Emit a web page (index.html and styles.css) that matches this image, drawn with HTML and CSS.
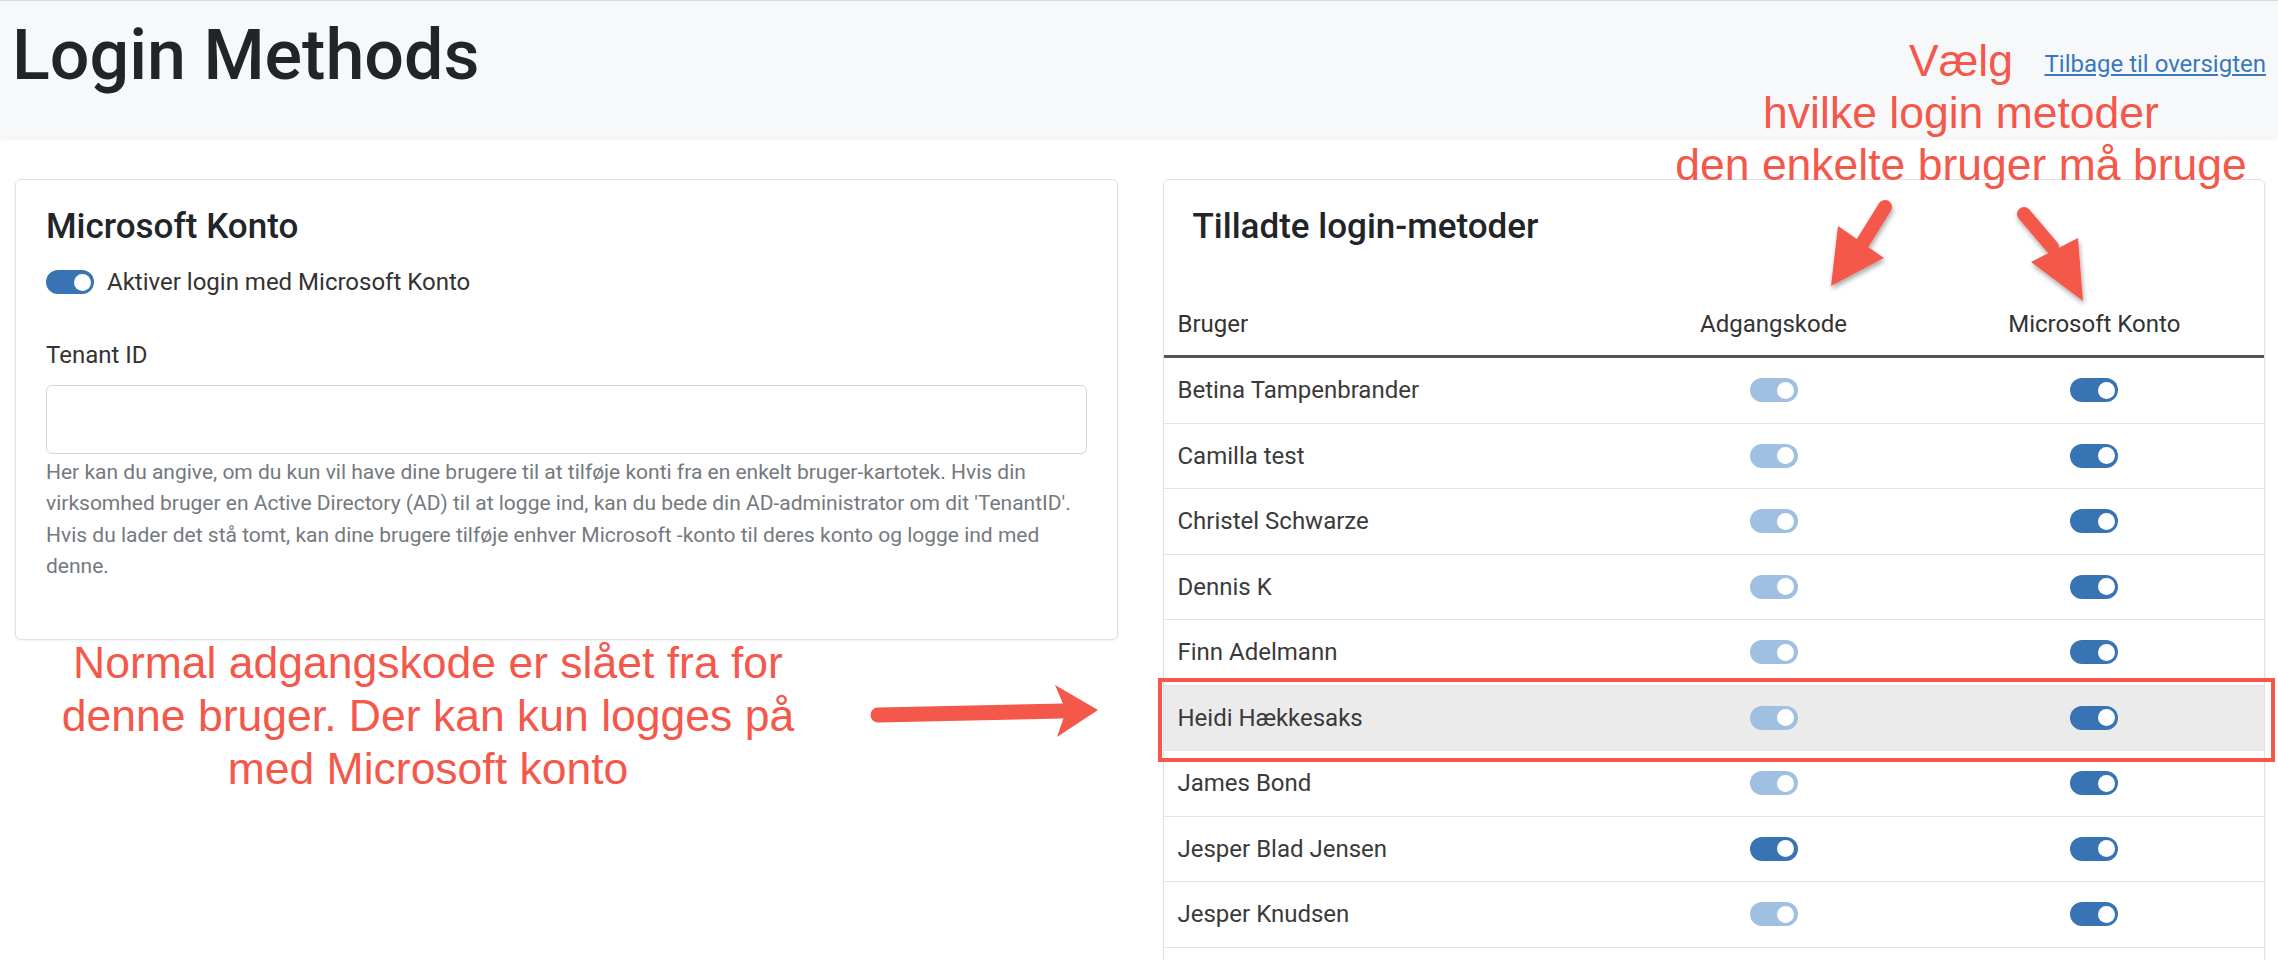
FILE: index.html
```html
<!doctype html>
<html>
	<head>
		<title>Login Methods</title>
		<meta charset="utf-8"/>
		<link rel="stylesheet" href="styles.css">
	</head>
	<body>
		<div class="topbar">
			<h1>Login Methods</h1>
			<a href="#" class="back">Tilbage til oversigten</a>
		</div>

		<div class="content">
			<div class="card ms">
				<h4>Microsoft Konto</h4>
				<div class="switchRow">
					<span class="switch"></span>
					<label>Aktiver login med Microsoft Konto</label>
				</div>
				<div class="field">
					<label for="tenant">Tenant ID</label>
					<input type="text" id="tenant"/>
					<p class="help">Her kan du angive, om du kun vil have dine brugere til at tilføje konti fra en enkelt bruger-kartotek. Hvis din virksomhed bruger en Active Directory (AD) til at logge ind, kan du bede din AD-administrator om dit 'TenantID'. Hvis du lader det stå tomt, kan dine brugere tilføje enhver Microsoft -konto til deres konto og logge ind med denne.</p>
				</div>
			</div>

			<div class="card methods">
				<h4>Tilladte login-metoder</h4>
				<table>
					<colgroup>
						<col style="width:459px">
						<col style="width:302px">
						<col>
					</colgroup>
					<thead>
						<tr><th>Bruger</th><th class="c">Adgangskode</th><th class="c">Microsoft Konto</th></tr>
					</thead>
					<tbody>
						<tr><td>Betina Tampenbrander</td><td><span class="switch dim"></span></td><td><span class="switch"></span></td></tr>
						<tr><td>Camilla test</td><td><span class="switch dim"></span></td><td><span class="switch"></span></td></tr>
						<tr><td>Christel Schwarze</td><td><span class="switch dim"></span></td><td><span class="switch"></span></td></tr>
						<tr><td>Dennis K</td><td><span class="switch dim"></span></td><td><span class="switch"></span></td></tr>
						<tr><td>Finn Adelmann</td><td><span class="switch dim"></span></td><td><span class="switch"></span></td></tr>
						<tr class="hover"><td>Heidi Hækkesaks</td><td><span class="switch dim"></span></td><td><span class="switch"></span></td></tr>
						<tr><td>James Bond</td><td><span class="switch dim"></span></td><td><span class="switch"></span></td></tr>
						<tr><td>Jesper Blad Jensen</td><td><span class="switch"></span></td><td><span class="switch"></span></td></tr>
						<tr><td>Jesper Knudsen</td><td><span class="switch dim"></span></td><td><span class="switch"></span></td></tr>
					</tbody>
				</table>
			</div>
		</div>

		<!-- annotations drawn over the screenshot -->
		<div class="note noteTop">Vælg<br>hvilke login metoder<br>den enkelte bruger må bruge</div>
		<div class="note noteLeft">Normal adgangskode er slået fra for<br>denne bruger. Der kan kun logges på<br>med Microsoft konto</div>
		<div class="mark"></div>
		<svg class="arrows" width="2278" height="960" viewBox="0 0 2278 960">
			<defs>
				<filter id="shadow" x="-50%" y="-50%" width="200%" height="200%">
					<feDropShadow dx="1" dy="3" stdDeviation="2.5" flood-color="#000" flood-opacity="0.35"/>
				</filter>
			</defs>
			<g fill="#f4584b" stroke="#f4584b" filter="url(#shadow)">
				<line x1="1885" y1="207" x2="1862" y2="244" stroke-width="14" stroke-linecap="round"/>
				<path d="M1838 226 L1884 258 L1831 286 Z" stroke="none"/>
				<line x1="2024" y1="214" x2="2052" y2="247" stroke-width="14" stroke-linecap="round"/>
				<path d="M2031 262 L2078 238 L2083 301 Z" stroke="none"/>
			</g>
			<g fill="#f4584b" stroke="#f4584b">
				<line x1="878" y1="715" x2="1062" y2="711" stroke-width="15" stroke-linecap="round"/>
				<path d="M1055 685 L1098 710 L1057 737 L1066 711 Z" stroke="none"/>
			</g>
		</svg>
	</body>
</html>
```

FILE: styles.css
```css
*{
	padding:0;margin:0;
	box-sizing:border-box;
	font-family:Roboto, "Noto Sans", sans-serif;
}

body{
	background:#fff;
	color:#212529;
	width:2278px;
	height:960px;
	overflow:hidden;
	position:relative;
}

.topbar{
	height:137px;
	border-top:1px solid #d9d9d9;
	background:#f7f8fa;
	box-shadow:0 2px 4px rgba(0,0,0,0.06);
	padding:12px 12px 0 12px;
	display:flex;
	justify-content:space-between;
	align-items:flex-start;
}

.topbar h1{
	font-size:70px;
	font-weight:500;
	line-height:84px;
}

.back{
	font-size:24px;
	line-height:36px;
	margin-top:33px;
	color:#3a78bd;
	text-decoration:underline;
}

.content{
	display:grid;
	grid-template-columns:1fr 1fr;
	gap:45px;
	padding:42px 13px 0 15px;
	align-items:start;
}

.card{
	background:#fff;
	border:1px solid #e2e2e2;
	border-radius:6px;
	box-shadow:0 1px 3px rgba(0,0,0,0.06);
}

.card h4{
	font-size:35px;
	font-weight:500;
	line-height:42px;
}

.ms{
	padding:26px 30px 56px 30px;
}

.ms h4{
	margin-bottom:16px;
}

.switchRow{
	display:flex;
	align-items:center;
	gap:13px;
	font-size:24px;
	line-height:36px;
	color:#333;
}

.field{
	margin-top:37px;
}

.field label{
	display:block;
	font-size:24px;
	line-height:36px;
	color:#333;
	margin-bottom:12px;
}

.field input{
	display:block;
	width:100%;
	height:69px;
	border:1px solid #d6d6d6;
	border-radius:6px;
	background:#fff;
}

.help{
	margin-top:3px;
	font-size:21px;
	line-height:31.4px;
	color:#74797e;
}

.methods{
	padding-top:26px;
	height:800px;
}

.methods h4{
	padding-left:29px;
	margin-bottom:44px;
}

table{
	width:100%;
	border-collapse:collapse;
	font-size:24px;
	line-height:36px;
	color:#3a3a3a;
}

th{
	font-weight:400;
	text-align:left;
	padding:14px 14px 13px 14px;
	border-bottom:3px solid #525252;
	color:#333;
}

th.c{
	text-align:center;
}

td{
	padding:14.25px 14px;
	border-bottom:1px solid #e4e4e4;
}

tr.hover td{
	background:#ebebeb;
}

.switch{
	display:block;
	position:relative;
	width:48px;
	height:24px;
	margin:6px auto;
	border-radius:12px;
	background:#3874b3;
}

.switchRow .switch{
	margin:0;
}

.switch.dim{
	background:#9fc0e0;
}

.switch::after{
	content:"";
	position:absolute;
	top:3.5px;
	right:3.5px;
	width:17px;
	height:17px;
	border-radius:50%;
	background:#fff;
}

.note{
	position:absolute;
	font-family:"Liberation Sans", Arial, sans-serif;
	font-size:44.5px;
	color:#f4584b;
	text-align:center;
	white-space:nowrap;
}

.noteTop{
	left:1661px;
	width:600px;
	top:35px;
	line-height:52px;
}

.noteLeft{
	left:0;
	width:856px;
	top:636px;
	line-height:53px;
}

.mark{
	position:absolute;
	left:1158px;
	top:678px;
	width:1117px;
	height:84px;
	border:4px solid #f4584b;
}

.arrows{
	position:absolute;
	left:0;
	top:0;
	pointer-events:none;
}
```
